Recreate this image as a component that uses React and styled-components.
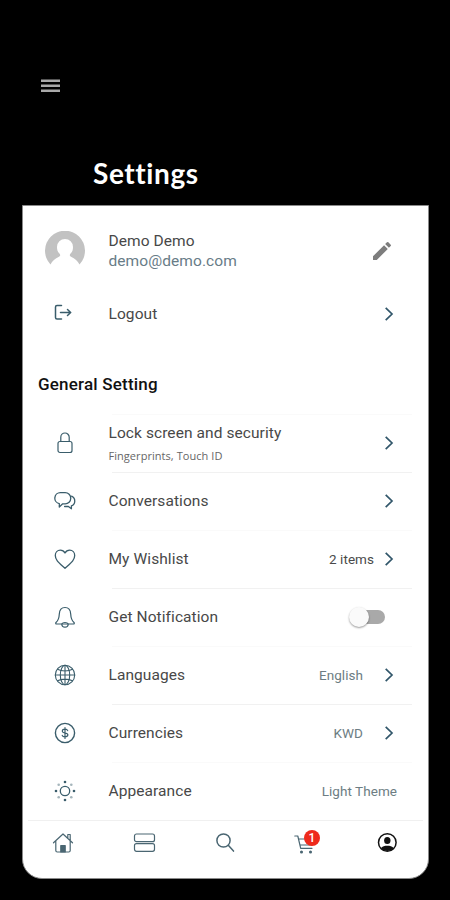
import styled, { createGlobalStyle, css } from "styled-components";
import { MdEdit } from "react-icons/md";

const GlobalStyle = createGlobalStyle`
  * {
    box-sizing: border-box;
  }

  body {
    margin: 0;
    background: #000;
    font-family: Roboto, "Liberation Sans", sans-serif;
  }
`;

const Screen = styled.div`
  display: flex;
  flex-direction: column;
  width: 450px;
  height: 900px;
  padding: 79px 21px 0 22px;
  background: #000;
`;

const MenuButton = styled.button`
  display: flex;
  width: 20px;
  height: 14px;
  margin-left: 18px;
  padding: 0;
  border: none;
  background: none;
`;

const Title = styled.h1`
  height: 112px;
  margin: 0;
  padding: 64px 0 0 71px;
  color: #fff;
  font-family: Lato, sans-serif;
  font-size: 28px;
  font-weight: 700;
  line-height: 32px;
  letter-spacing: 0.6px;
`;

const Card = styled.main`
  display: flex;
  flex-direction: column;
  height: 674px;
  border: 1px solid #8a8a8a;
  border-radius: 0 0 20px 20px;
  background: #fff;
`;

const Row = styled.div`
  display: grid;
  grid-template-columns: 84px 1fr auto;
  column-gap: 1px;
  align-items: center;
  height: ${(props) => props.$height || 57}px;
  padding-right: ${(props) => props.$end || 34}px;
  padding-bottom: ${(props) => (props.$height ? 0 : 2)}px;
`;

const IconSlot = styled.div`
  display: flex;
  justify-content: center;
  color: #3a5d6b;
`;

const Label = styled.div`
  padding-left: 0.5px;
  color: #484848;
  font-size: 15.5px;
  font-weight: 400;
  line-height: 20px;
  letter-spacing: 0.08px;

  ${(props) =>
    props.$muted &&
    css`
      color: #687c87;
    `}
`;

const Caption = styled.div`
  margin-top: 5px;
  padding-left: 0.5px;
  color: #666;
  font-family: "Open Sans", sans-serif;
  font-size: 11px;
  line-height: 15px;
  letter-spacing: 0.05px;
`;

const Trailing = styled.div`
  display: flex;
  align-items: center;
  gap: ${(props) => props.$gap || 21}px;
`;

const Value = styled.span`
  color: ${(props) => (props.$dark ? "#4a4a4a" : "#6d7d83")};
  font-size: 13.5px;
  letter-spacing: 0.05px;
`;

const Heading = styled.h2`
  display: flex;
  align-items: center;
  height: 81px;
  margin: 0;
  padding: 20px 0 0 15px;
  color: #111;
  font-size: 17px;
  font-weight: 500;
  letter-spacing: 0.2px;
`;

const Divider = styled.div`
  height: 1px;
  margin: 0 16px 0 89px;
  background: ${(props) => (props.$faint ? "#fafafa" : "#f1f1f1")};
`;

const Switch = styled.div`
  display: flex;
  align-items: center;
  width: 31px;
  height: 14px;
  border-radius: 7px;
  background: #a9a9a9;
`;

const Thumb = styled.div`
  width: 20px;
  height: 20px;
  margin-left: -5px;
  border-radius: 50%;
  background: #fafafa;
  box-shadow: 0 1px 2px rgba(0, 0, 0, 0.4);
`;

const Nav = styled.nav`
  display: grid;
  grid-template-columns: repeat(5, 81px);
  flex: 1;
  align-items: start;
  margin: 0 5px;
  padding-top: 10px;
  border-top: 1px solid #f0f0f0;
`;

const NavItem = styled.div`
  display: flex;
  position: relative;
  justify-content: center;
  width: 24px;
  margin-left: 23px;
  color: ${(props) => (props.$active ? "#111" : "#4a6672")};
`;

const Badge = styled.span`
  position: absolute;
  top: -1px;
  left: 10px;
  width: 16px;
  height: 16px;
  border-radius: 50%;
  background: #ee2a1c;
  color: #fff;
  font-size: 12px;
  font-weight: 500;
  line-height: 16px;
  text-align: center;
`;

function Icon({ children, size = 22, width = 1.2 }) {
  return (
    <svg
      width={size}
      height={size}
      viewBox={`0 0 ${size} ${size}`}
      fill="none"
      stroke="currentColor"
      strokeWidth={width}
      strokeLinecap="round"
      strokeLinejoin="round"
    >
      {children}
    </svg>
  );
}

function Avatar() {
  return (
    <svg width="40" height="40" viewBox="0 0 40 40">
      <path
        fill="#c2c2c2"
        d="M5.500 33.500a20 20 0 1 1 29 0c-1.800-3.500-4.500-6-8.500-7.700-1.700-.8-1.500-2.200-.2-3.500 1.700-1.700 2.200-3.700 2.200-6.300a8 8 0 0 0-16 0c0 2.600.5 4.600 2.200 6.300 1.300 1.300 1.500 2.700-.2 3.500-4 1.700-6.700 4.200-8.500 7.700Z"
      />
    </svg>
  );
}

function Chevron() {
  return (
    <svg
      width="10"
      height="14"
      viewBox="0 0 10 14"
      fill="none"
      stroke="#31566a"
      strokeWidth="1.7"
    >
      <path d="M1.700 0.800 8 7l-6.300 6.200" />
    </svg>
  );
}

const logoutIcon = (
  <Icon width={1.5}>
    <path d="M7.500 2.500H3Q1.500 2.500 1.500 4v10.500Q1.500 16 3 16h4.500" />
    <path d="M6.500 9.500h10M13.500 6.500l3.200 3-3.200 3" />
  </Icon>
);

const lockIcon = (
  <Icon>
    <rect x="4" y="9.500" width="14" height="11" rx="2" />
    <path d="M6.800 9.500V5.200a4.200 4.200 0 0 1 8.400 0v4.300" />
  </Icon>
);

const chatIcon = (
  <Icon width={1.3}>
    <path d="M6.500 2.700h4.700a5.300 5.300 0 0 1 0 11.100h-2.500L5.300 17v-3.400A5.500 5.500 0 0 1 6.500 2.700Z" />
    <path d="M17.600 6.200c4.300 2 4.200 8-.2 9.600v3l-3-2.300h-3.800" />
  </Icon>
);

const heartIcon = (
  <Icon width={1.3}>
    <path d="M11 20.300 9 18.500C4 14 1.300 11.500 1.300 7.400c0-3 2.200-5.300 5-5.300 2 0 3.700 1 4.700 2.900 1-1.900 2.700-2.900 4.700-2.900 2.800 0 5 2.300 5 5.300 0 4.100-2.700 6.600-7.700 11.100Z" />
  </Icon>
);

const bellIcon = (
  <Icon>
    <path d="M11 1.500c-3.500 0-5.500 2.800-5.700 6.500-.2 4.600-.8 6.300-3.300 8.500-.6.600-.3 1.500.6 1.500h16.800c.9 0 1.200-.9.600-1.500-2.500-2.200-3.100-3.900-3.300-8.500-.2-3.700-2.200-6.500-5.700-6.500Z" />
    <path d="M7.800 18c0 4.200 6.400 4.200 6.400 0-1-2-5.400-2-6.400 0Z" />
  </Icon>
);

const globeIcon = (
  <Icon width={1.1}>
    <circle cx="11" cy="11" r="9.700" />
    <ellipse cx="11" cy="11" rx="4.700" ry="9.700" />
    <path d="M11 1.300v19.400M1.300 11h19.400M3.500 5.200c4 2.300 11 2.300 15 0M3.500 16.800c4-2.300 11-2.300 15 0" />
  </Icon>
);

const dollarIcon = (
  <Icon width={1.4}>
    <circle cx="11" cy="11" r="9.600" />
    <path
      strokeWidth="1.2"
      d="M13.700 8.600c-.4-1-1.400-1.400-2.700-1.400-3.300 0-3.700 3.100-.3 3.700l.8.200c3.400.6 3 3.700-.5 3.700-1.400 0-2.500-.5-2.800-1.500M11 5.600v10.800"
    />
  </Icon>
);

const sunIcon = (
  <Icon width={1.3}>
    <circle cx="11" cy="11" r="4.700" />
    <g fill="currentColor" stroke="none">
      <circle cx="11" cy="2" r="1.300" />
      <circle cx="11" cy="20" r="1.300" />
      <circle cx="2" cy="11" r="1.300" />
      <circle cx="20" cy="11" r="1.300" />
      <g opacity="0.450">
        <circle cx="4.700" cy="4.700" r="1.300" />
        <circle cx="17.300" cy="4.700" r="1.300" />
        <circle cx="4.700" cy="17.300" r="1.300" />
        <circle cx="17.300" cy="17.300" r="1.300" />
      </g>
    </g>
  </Icon>
);

function SettingRow({ icon, label, caption, value, gap, dark }) {
  return (
    <Row>
      <IconSlot>{icon}</IconSlot>
      <div>
        <Label>{label}</Label>
        {caption && <Caption>{caption}</Caption>}
      </div>
      <Trailing $gap={gap}>
        {value && <Value $dark={dark}>{value}</Value>}
        <Chevron />
      </Trailing>
    </Row>
  );
}

export default function App() {
  return (
    <>
      <GlobalStyle />
      <Screen>
        <MenuButton aria-label="Menu">
          <svg width="20" height="14" viewBox="0 0 20 14" fill="#a9a9a9">
            <rect x="1" y="0.500" width="19" height="2.500" />
            <rect x="1" y="5.500" width="19" height="2.500" />
            <rect x="1" y="10.500" width="19" height="2.500" />
          </svg>
        </MenuButton>
        <Title>Settings</Title>
        <Card>
          <Row $height={89} $end={34}>
            <IconSlot>
              <Avatar />
            </IconSlot>
            <div>
              <Label>Demo Demo</Label>
              <Label $muted>demo@demo.com</Label>
            </div>
            <MdEdit size={24} color="#7d7d7d" />
          </Row>
          <Row $height={38}>
            <IconSlot>{logoutIcon}</IconSlot>
            <Label>Logout</Label>
            <Chevron />
          </Row>
          <Heading>General Setting</Heading>
          <Divider $faint />
          <SettingRow
            icon={lockIcon}
            label="Lock screen and security"
            caption="Fingerprints, Touch ID"
          />
          <Divider />
          <SettingRow icon={chatIcon} label="Conversations" />
          <Divider $faint />
          <SettingRow
            icon={heartIcon}
            label="My Wishlist"
            value="2 items"
            gap={10}
            dark
          />
          <Divider />
          <Row $end={43}>
            <IconSlot>{bellIcon}</IconSlot>
            <Label>Get Notification</Label>
            <Switch role="switch" aria-checked="false">
              <Thumb />
            </Switch>
          </Row>
          <Divider $faint />
          <SettingRow icon={globeIcon} label="Languages" value="English" />
          <Divider />
          <SettingRow icon={dollarIcon} label="Currencies" value="KWD" />
          <Divider $faint />
          <Row $end={31}>
            <IconSlot>{sunIcon}</IconSlot>
            <Label>Appearance</Label>
            <Value>Light Theme</Value>
          </Row>
          <Nav>
            <NavItem>
              <Icon size={24}>
                <path d="M2.500 11.800 12 3l9.500 8.800M4.800 10v9.500Q4.800 21 6.300 21h11.400q1.500 0 1.500-1.500V10M16.800 7V3.500h2.400v5.700" />
                <path d="M9.800 21v-6.500h4.400V21Z" fill="currentColor" />
              </Icon>
            </NavItem>
            <NavItem>
              <Icon size={24}>
                <rect x="2.500" y="3" width="20" height="7.700" rx="2" />
                <rect x="2.500" y="12.600" width="20" height="7.700" rx="2" />
              </Icon>
            </NavItem>
            <NavItem>
              <Icon size={24} width={1.5}>
                <circle cx="10.500" cy="9.500" r="6.600" />
                <path d="m15.300 14.300 5.200 5.800" />
              </Icon>
            </NavItem>
            <NavItem>
              <Icon size={24}>
                <path d="M.8 5h3l2.900 12.300h11.300M4.700 8h14l-1.300 6H6" />
                <circle cx="7.500" cy="21" r="0.900" fill="currentColor" />
                <circle cx="16.500" cy="21" r="0.900" fill="currentColor" />
              </Icon>
              <Badge>1</Badge>
            </NavItem>
            <NavItem $active>
              <Icon size={24} width={1.5}>
                <circle cx="12.300" cy="11.500" r="8.800" />
                <g fill="currentColor" stroke="none">
                  <ellipse cx="12.300" cy="9.500" rx="3.200" ry="3.500" />
                  <path d="M5.800 17.200C7.300 15.200 9.800 14.800 12.300 14.800s5 .4 6.500 2.400a8.800 8.800 0 0 1-13 0Z" />
                </g>
              </Icon>
            </NavItem>
          </Nav>
        </Card>
      </Screen>
    </>
  );
}
